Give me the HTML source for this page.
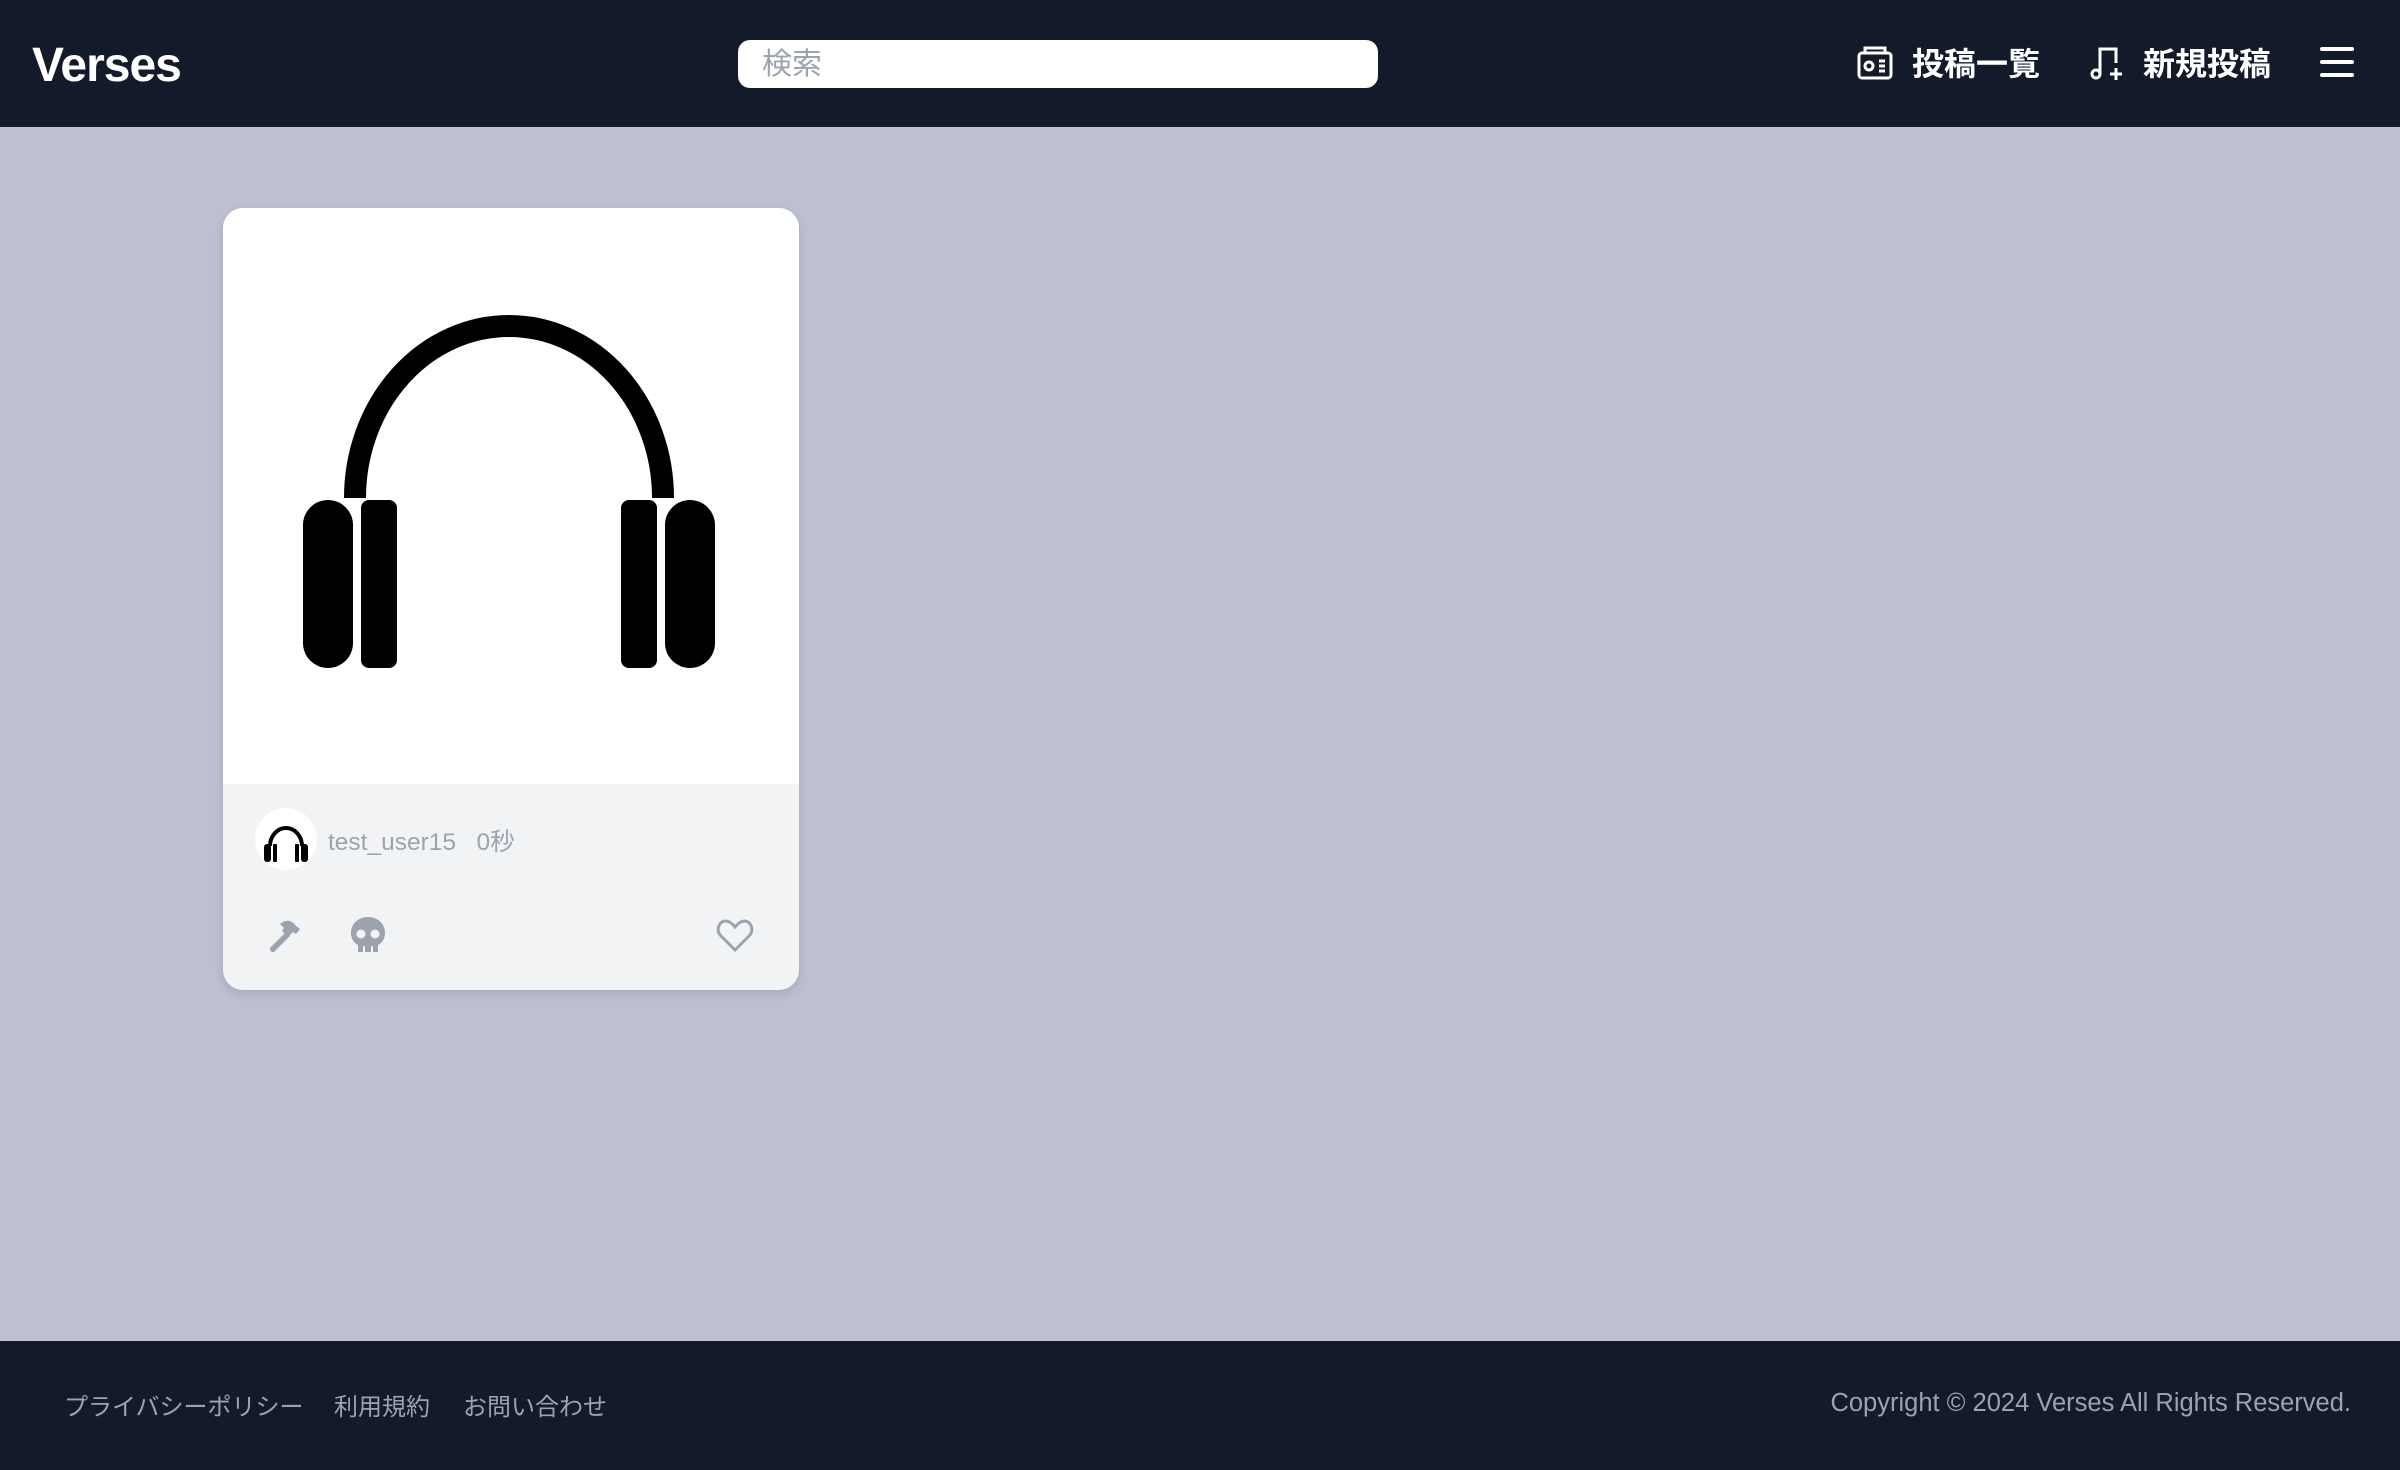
<!DOCTYPE html>
<html><head><meta charset="utf-8"><style>
*{margin:0;padding:0;box-sizing:border-box}
body{width:2400px;height:1470px;background:#bdc0d3;font-family:"Liberation Sans","Noto Sans CJK JP",sans-serif;position:relative;overflow:hidden}
.hdr{position:absolute;left:0;top:0;width:2400px;height:127px;background:#131a2a}
.logo{position:absolute;left:32px;top:38px;color:#fff;font-weight:bold;font-size:48px;letter-spacing:-1px}
.search{position:absolute;left:738px;top:40px;width:640px;height:48px;background:#fff;border-radius:12px;color:#9ca3af;font-size:30px;line-height:50px;padding-left:24px}
.nav{position:absolute;top:40px;color:#fff;font-weight:bold;font-size:32px;line-height:48px}
.card{position:absolute;left:223px;top:208px;width:576px;height:782px;border-radius:20px;overflow:hidden;background:#f2f3f5;box-shadow:0 4px 10px rgba(0,0,0,.12)}
.img{width:576px;height:576px;background:#fff}
.ftr{position:absolute;left:0;top:1341px;width:2400px;height:129px;background:#131a2a;color:#9ca3af;font-size:24px}
.ftr span{position:absolute;top:46px}
</style></head><body>
<div class="hdr">
<div class="logo">Verses</div>
<div class="search">検索</div>
<svg style="position:absolute;left:1857px;top:45px" width="36" height="36" viewBox="0 0 36 36" fill="none" stroke="#fff" stroke-width="3"><rect x="2" y="8" width="32" height="25" rx="3"/><path d="M8 8V3h20v5"/><circle cx="12" cy="21" r="4"/><path d="M22 16h6M22 21h6M22 26h6"/></svg>
<div class="nav" style="left:1912px">投稿一覧</div>
<svg style="position:absolute;left:2090px;top:46px" width="36" height="36" viewBox="0 0 36 36" fill="none" stroke="#fff" stroke-width="3"><path d="M10 28V3h16v14"/><circle cx="6" cy="28" r="4"/><path d="M26 22v12M20 28h12"/></svg>
<div class="nav" style="left:2143px">新規投稿</div>
<svg style="position:absolute;left:2320px;top:46px" width="34" height="32" viewBox="0 0 34 32" stroke="#fff" stroke-width="4" stroke-linecap="round"><path d="M2 3h30M2 16h30M2 29h30"/></svg>
</div>
<div class="card">
<div class="img"><svg width="576" height="576" viewBox="0 0 576 576"><path d="M132 290 A154 172 0 0 1 440 290" fill="none" stroke="#000" stroke-width="22"/><rect x="80" y="292" width="50" height="168" rx="25"/><rect x="138" y="292" width="36" height="168" rx="8"/><rect x="442" y="292" width="50" height="168" rx="25"/><rect x="398" y="292" width="36" height="168" rx="8"/></svg></div>
<svg style="position:absolute;left:32px;top:600px" width="62" height="62" viewBox="0 0 62 62"><circle cx="31" cy="31" r="31" fill="#fff"/><path d="M15 38A16 18 0 0 1 47 38" fill="none" stroke="#000" stroke-width="4"/><rect x="9" y="36" width="7" height="18" rx="3"/><rect x="18" y="36" width="4" height="18" rx="1"/><rect x="46" y="36" width="7" height="18" rx="3"/><rect x="40" y="36" width="4" height="18" rx="1"/></svg>
<div style="position:absolute;left:105px;top:615px;color:#9ca3af;font-size:24.5px">test_user15&nbsp;&nbsp;&nbsp;0秒</div>
<svg style="position:absolute;left:43px;top:708px" width="38" height="38" viewBox="0 0 38 38" fill="#9ca3af"><path d="M4 32l16-16 4 4-16 16c-2 1-4-1-4-4z"/><path d="M14 8c6-5 12-4 16 2l4 3-4 5-3-2-5 5-6-6 2-3z"/></svg>
<svg style="position:absolute;left:127px;top:708px" width="36" height="38" viewBox="0 0 36 38" fill="#9ca3af"><path d="M18 1C8 1 1 8 1 17c0 6 3 10 7 12v7h20v-7c4-2 7-6 7-12C35 8 28 1 18 1z"/><circle cx="11" cy="18" r="4.5" fill="#f2f3f5"/><circle cx="25" cy="18" r="4.5" fill="#f2f3f5"/><path d="M14 30v8M22 30v8" stroke="#f2f3f5" stroke-width="2"/></svg>
<svg style="position:absolute;left:493px;top:711px" width="38" height="34" viewBox="0 0 38 34" fill="none" stroke="#9ca3af" stroke-width="3"><path d="M19 31L5 17C0 12 2 3 9 2c4 0 7 2 10 6 3-4 6-6 10-6 7 1 9 10 4 15z"/></svg>
</div>
<div class="ftr">
<span style="left:64px">プライバシーポリシー</span>
<span style="left:334px">利用規約</span>
<span style="left:463px">お問い合わせ</span>
<span style="right:49px;font-size:25.5px;top:48px">Copyright © 2024 Verses All Rights Reserved.</span>
</div>
</body></html>
